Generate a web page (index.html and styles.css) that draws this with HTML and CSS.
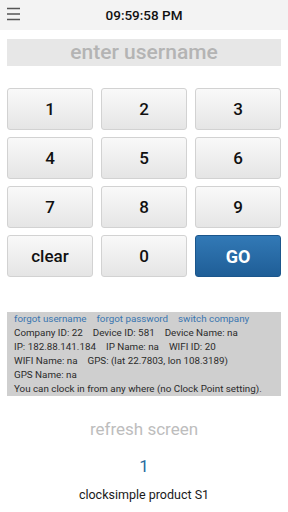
FILE: index.html
```html
<!DOCTYPE html>
<html>
<head>
<meta charset="utf-8">
<link rel="stylesheet" href="styles.css">
</head>
<body>
<div class="header">
  <svg class="menu" width="14" height="14" viewBox="0 0 14 14"><path d="M0 1.5h13M0 7h13M0 12.5h13" stroke="#555" stroke-width="1.4" fill="none"/></svg>
  <div class="time">09:59:58 PM</div>
</div>
<div class="input">enter username</div>
<div class="keypad">
  <div class="key">1</div><div class="key">2</div><div class="key">3</div>
  <div class="key">4</div><div class="key">5</div><div class="key">6</div>
  <div class="key">7</div><div class="key">8</div><div class="key">9</div>
  <div class="key">clear</div><div class="key">0</div><div class="key go">GO</div>
</div>
<div class="info">
  <div class="links"><span>forgot username</span><span>forgot password</span><span>switch company</span></div>
  <div class="row"><span>Company ID: 22</span><span>Device ID: 581</span><span>Device Name: na</span></div>
  <div class="row"><span>IP: 182.88.141.184</span><span>IP Name: na</span><span>WIFI ID: 20</span></div>
  <div class="row"><span>WIFI Name: na</span><span>GPS: (lat 22.7803, lon 108.3189)</span></div>
  <div class="row"><span>GPS Name: na</span></div>
  <div class="row"><span>You can clock in from any where (no Clock Point setting).</span></div>
</div>
<div class="refresh">refresh screen</div>
<div class="count">1</div>
<div class="product">clocksimple product S1</div>
</body>
</html>
```
FILE: styles.css
```css
html, body {
  margin: 0;
  padding: 0;
  background: #fff;
  font-family: Roboto, "Noto Sans", sans-serif;
}
body {
  width: 288px;
  height: 512px;
  overflow: hidden;
}
.header {
  height: 30px;
  background: #f3f3f3;
  position: relative;
  display: flex;
  align-items: center;
  justify-content: center;
}
.menu {
  position: absolute;
  left: 7px;
  top: 7px;
}
.time {
  font-size: 13.5px;
  font-weight: 500;
  color: #111;
}
.input {
  margin: 9px 7px 0;
  height: 27px;
  background: #e7e7e7;
  color: #b4b4b4;
  font-size: 21px;
  font-weight: 500;
  text-align: center;
  line-height: 27px;
}
.keypad {
  margin: 22px 7px 0;
  display: grid;
  grid-template-columns: repeat(3, 1fr);
  column-gap: 8px;
  row-gap: 7px;
}
.key {
  height: 40px;
  border: 1px solid #d2d2d2;
  border-radius: 3px;
  background: linear-gradient(#f9f9f9, #e5e5e5);
  display: flex;
  align-items: center;
  justify-content: center;
  font-size: 17px;
  font-weight: 500;
  color: #111;
}
.key.go {
  background: linear-gradient(#3279b6, #1f5e97);
  border-color: #1b568c;
  color: #fff;
  font-size: 18px;
  font-weight: 700;
}
.info {
  margin: 35px 7px 0;
  height: 84px;
  background: #cfcfcf;
  padding: 0 7px;
  box-sizing: border-box;
  font-size: 9.8px;
  line-height: 14px;
  color: #2b2b2b;
}
.links, .row {
  display: flex;
  gap: 10px;
  white-space: nowrap;
}
.links {
  color: #3a76b0;
}
.refresh {
  margin-top: 20px;
  text-align: center;
  font-size: 17px;
  line-height: 26px;
  color: #bdbdbd;
}
.count {
  margin-top: 11px;
  text-align: center;
  font-size: 17px;
  line-height: 26px;
  color: #2a6c9e;
}
.product {
  margin-top: 7px;
  text-align: center;
  font-size: 12.5px;
  line-height: 18px;
  color: #1a1a1a;
}
```
